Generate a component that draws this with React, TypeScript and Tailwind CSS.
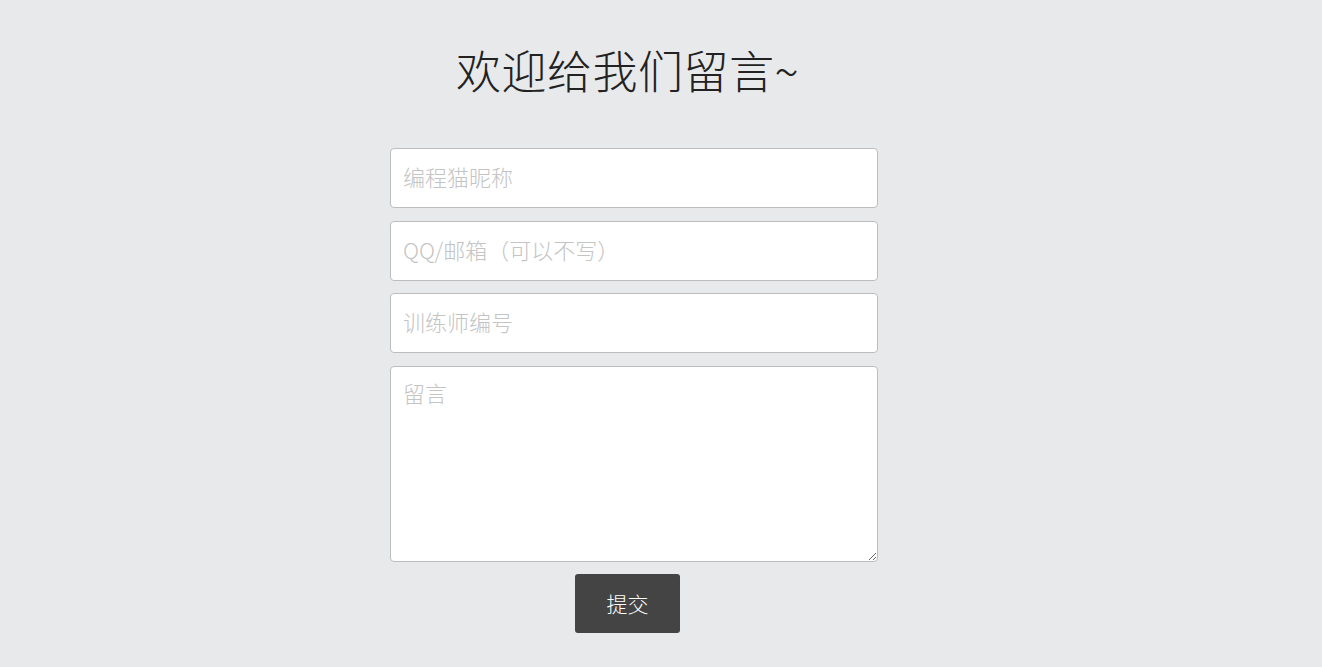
import React from "react";

const fieldCls =
  "block w-full h-[60px] rounded-[4px] border border-[#bdbdbd] bg-white px-3 text-[22px] text-[#333] placeholder:text-[#c4c4c4] outline-none font-light";

export default function App() {
  return (
    <div
      className="min-h-[667px] w-full bg-[#e8e9eb]"
      style={{ fontFamily: '"Noto Sans CJK SC", "Noto Sans", sans-serif' }}
    >
      <div className="w-[1255px] flex flex-col items-center pt-[37px]">
        <h1 className="text-[45px] leading-[66px] font-light text-[#222] tracking-[0.5px]">
          欢迎给我们留言~
        </h1>

        {/* Form */}
        <form className="mt-[45px] ml-[13px] w-[488px] flex flex-col gap-[12.5px]">
          <input className={`${fieldCls} pb-[4px]`} placeholder="编程猫昵称" />
          <input className={`${fieldCls} pb-[4px]`} placeholder="QQ/邮箱（可以不写）" />
          <input className={`${fieldCls} pb-[4px]`} placeholder="训练师编号" />
          <textarea
            className="block w-full h-[196px] rounded-[4px] border border-[#bdbdbd] bg-white px-3 pt-[8px] text-[22px] leading-[34px] text-[#333] placeholder:text-[#c4c4c4] outline-none font-light"
            placeholder="留言"
          />
        </form>

        <button
          type="button"
          className="mt-[12.5px] w-[105px] h-[59px] rounded-[3px] bg-[#444444] text-white text-[21px] font-light"
        >
          提交
        </button>
      </div>
    </div>
  );
}
